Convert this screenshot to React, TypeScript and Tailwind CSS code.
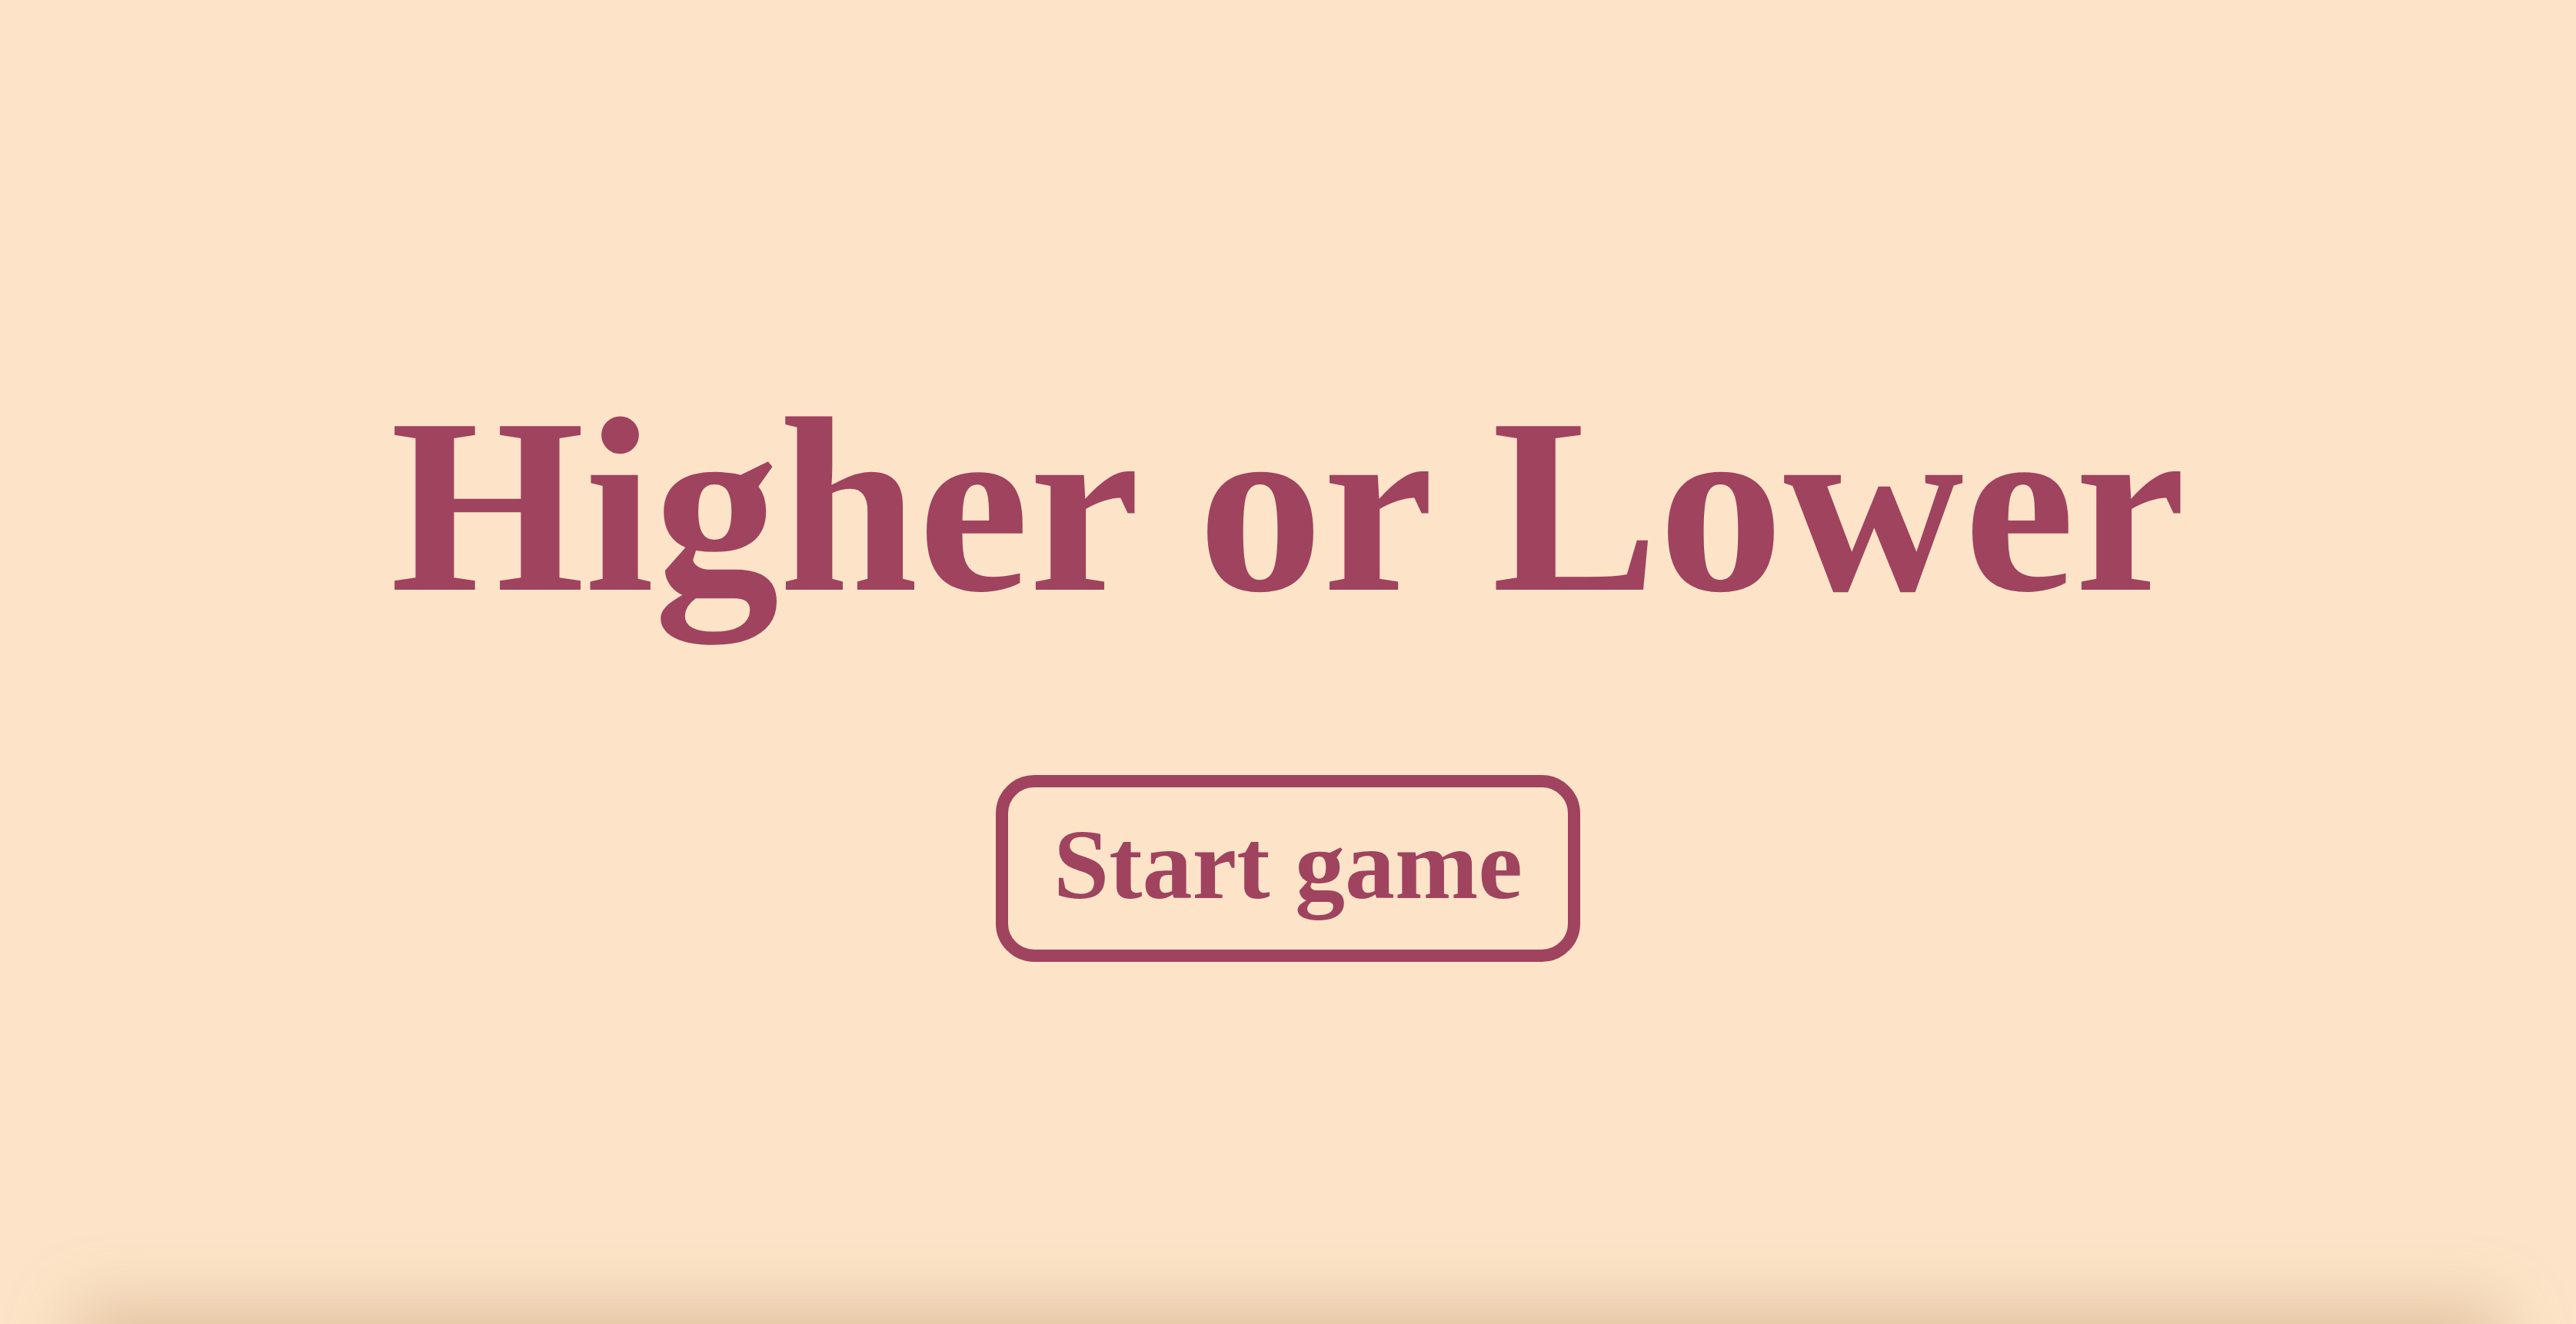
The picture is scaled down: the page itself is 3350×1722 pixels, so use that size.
import React from "react";

export default function App() {
  return (
    <div className="relative flex h-screen w-full flex-col items-center justify-center overflow-hidden bg-[#fde4c8] font-['Liberation_Serif',serif] text-[#a0435f]">
      <h1 className="m-0 text-[325px] font-bold leading-[1.15]">Higher or Lower</h1>
      <button className="mt-[164px] flex h-[243px] w-[760px] items-center justify-center rounded-[50px] border-[16px] border-[#a0435f] bg-transparent text-[130px] font-bold leading-none text-[#a0435f]">
        <span className="-mt-[12px]">Start game</span>
      </button>
      <div className="pointer-events-none absolute left-[120px] right-[120px] top-full h-[200px] shadow-[0_0_90px_20px_rgba(160,120,70,0.35)]" />
    </div>
  );
}
